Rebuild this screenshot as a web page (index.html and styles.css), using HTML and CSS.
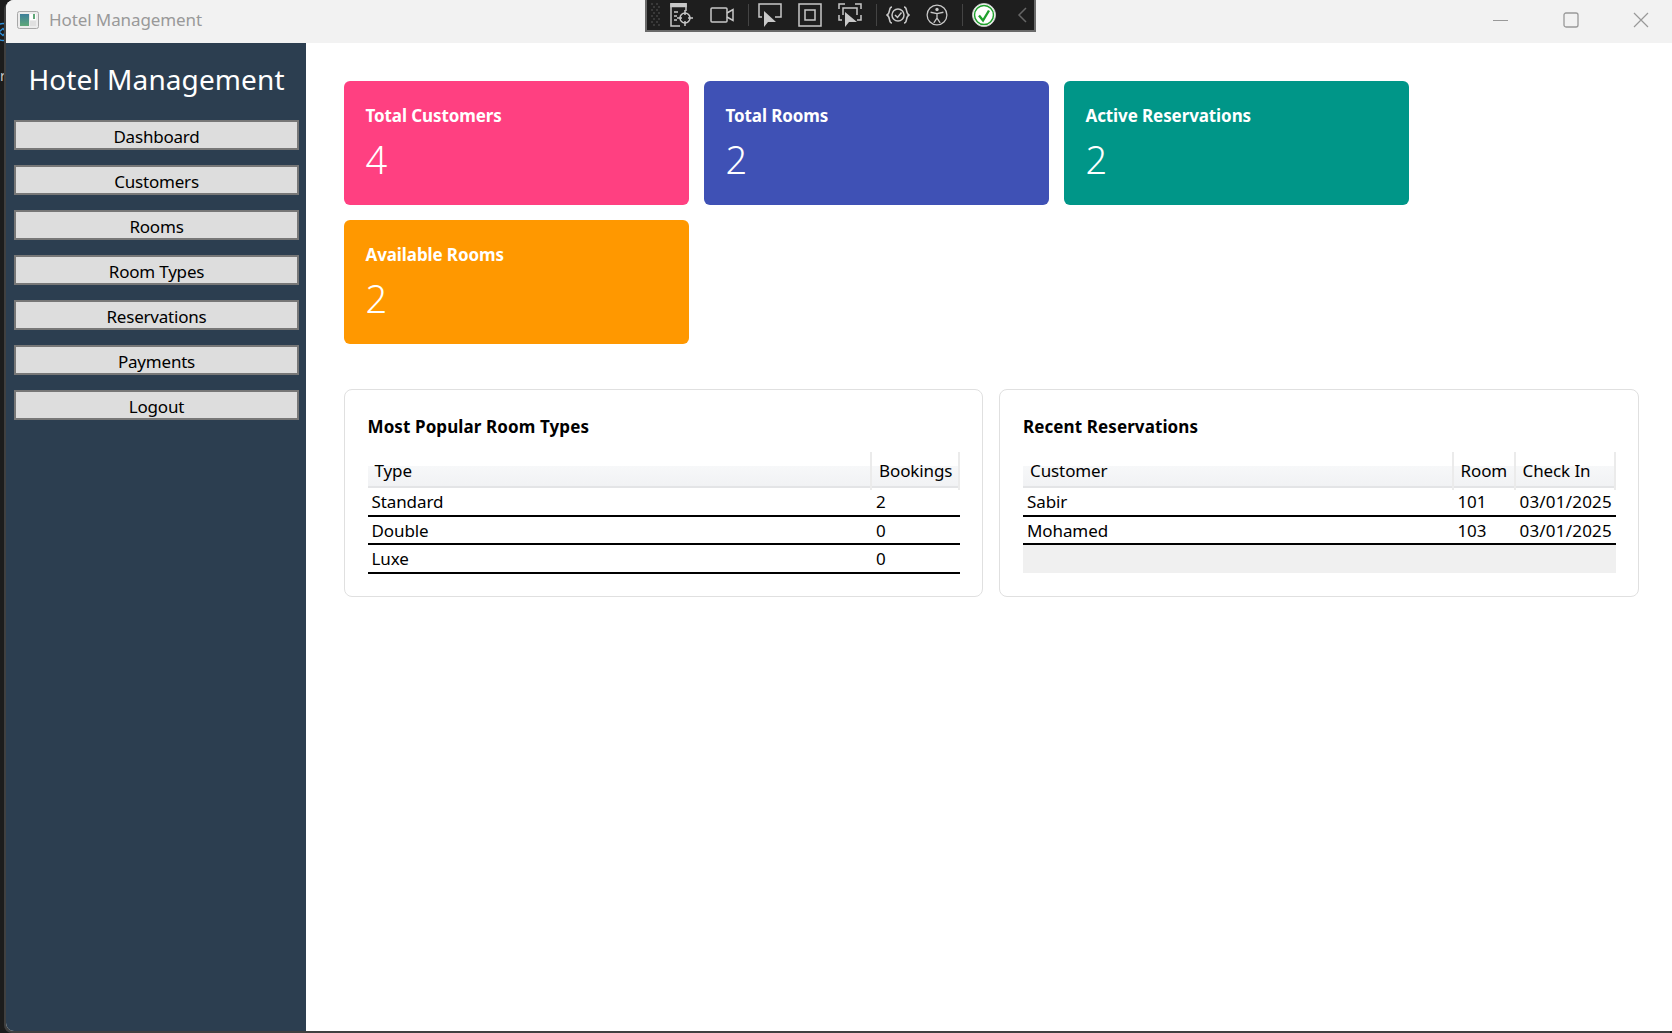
FILE: index.html
```html
<!DOCTYPE html>
<html>
<head>
  <title>Hotel Management</title>
  <meta charset="utf-8" />
  <link rel="stylesheet" href="styles.css">
</head>
<body>

<!--Bits of the desktop behind the window-->
<svg class="peek-icon" width="6" height="20" viewBox="0 0 6 20" fill="none" stroke="#2f8fd8" stroke-width="1.4">
  <circle cx="3" cy="10" r="8.500"/>
  <path d="M-1 10l4-3.500 3 3.500-3 3.500z"/>
</svg>
<span class="peek-text">r</span>

<div class="window">

  <!--Title bar-->
  <header class="titlebar">
    <svg class="app-icon" width="22" height="18" viewBox="0 0 22 18">
      <defs>
        <linearGradient id="pane" x1="0" y1="0" x2="0" y2="1">
          <stop offset="0" stop-color="#3d7f9a"/>
          <stop offset="1" stop-color="#5fa878"/>
        </linearGradient>
      </defs>
      <rect x="0.500" y="0.500" width="21" height="17" rx="2" fill="#ececec" stroke="#a8a8a8"/>
      <rect x="3" y="3" width="9" height="12" fill="url(#pane)"/>
      <rect x="13" y="3" width="6" height="6" fill="#fff"/>
      <rect x="16" y="3" width="2" height="5" fill="#5fa878"/>
      <rect x="13" y="10" width="6" height="5" fill="#e0e0e0"/>
    </svg>
    <span class="window-title">Hotel Management</span>
    <div class="window-controls">
      <svg width="16" height="16" viewBox="0 0 16 16"><path d="M0 8.500h15" stroke="#999" fill="none"/></svg>
      <svg width="16" height="16" viewBox="0 0 16 16"><rect x="1" y="1" width="14" height="14" rx="2" stroke="#999" stroke-width="1.300" fill="none"/></svg>
      <svg width="16" height="16" viewBox="0 0 16 16"><path d="M1 1l14 14M15 1L1 15" stroke="#999" stroke-width="1.200" fill="none"/></svg>
    </div>
  </header>

  <!--Debug toolbar over the title bar-->
  <div class="debug-toolbar">
    <svg class="grip" width="10" height="26" viewBox="0 0 10 26">
      <path d="M1 2h2M6 2h2M3 5h2M8 5h2M1 8h2M6 8h2M3 11h2M8 11h2M1 14h2M6 14h2M3 17h2M8 17h2M1 20h2M6 20h2M3 23h2M8 23h2" stroke="#555" fill="none"/>
    </svg>
    <svg width="24" height="24" viewBox="0 0 24 24" fill="none" stroke="#c8c8c8" stroke-width="1.500">
      <path d="M10 23H1V1h15v7"/>
      <path d="M1 0.500h15v3H1z" fill="#c8c8c8"/>
      <path d="M4 9h4M4 13h3M4 17h3"/>
      <circle cx="15" cy="15" r="5"/>
      <path d="M15 7v5M15 18v5M7 15h5M18 15h5"/>
    </svg>
    <svg width="24" height="24" viewBox="0 0 24 24" fill="none" stroke="#c8c8c8" stroke-width="1.500">
      <rect x="1" y="5" width="16" height="14" rx="1"/>
      <path d="M17 10l6-3.500v11l-6-3.500"/>
    </svg>
    <i class="sep"></i>
    <svg width="24" height="24" viewBox="0 0 24 24" fill="none" stroke="#c8c8c8" stroke-width="1.500">
      <path d="M4 14H1V1h22v13h-6"/>
      <path d="M6 8v16l4-5 8 0z" fill="#c8c8c8" stroke="none"/>
    </svg>
    <svg width="24" height="24" viewBox="0 0 24 24" fill="none" stroke="#c8c8c8" stroke-width="1.500">
      <rect x="1" y="1" width="22" height="22"/>
      <rect x="7" y="7" width="10" height="10"/>
    </svg>
    <svg width="24" height="24" viewBox="0 0 24 24" fill="none" stroke="#c8c8c8" stroke-width="1.500">
      <path d="M1 6V1h6M17 1h6v5M1 12v5h3M23 12v5h-4M5 12V5h14v7"/>
      <path d="M7 9v15l4-5 8 0z" fill="#c8c8c8" stroke="none"/>
    </svg>
    <i class="sep"></i>
    <svg width="24" height="24" viewBox="0 0 24 24" fill="none" stroke="#c8c8c8" stroke-width="1.500">
      <path d="M6 4C2 4 5 10 1 12c4 2 1 8 5 8M18 4c4 0 1 6 5 8-4 2-1 8-5 8"/>
      <circle cx="12" cy="12" r="6"/>
      <path d="M9 12l2.500 2.500 4-5"/>
    </svg>
    <svg width="22" height="22" viewBox="0 0 24 24" fill="none" stroke="#c8c8c8" stroke-width="1.400">
      <circle cx="12" cy="12" r="10.800"/>
      <circle cx="12" cy="6" r="1.800" fill="#c8c8c8" stroke="none"/>
      <path d="M5 9l7 1.500 7-1.500M12 10.500v5M12 15.500l-3.500 5M12 15.500l3.500 5"/>
    </svg>
    <i class="sep"></i>
    <svg width="24" height="24" viewBox="0 0 24 24">
      <circle cx="12" cy="12" r="11.500" fill="#fff" stroke="#c4c4c4"/>
      <circle cx="12" cy="12" r="9.500" fill="#fff" stroke="#1fa02c" stroke-width="1.500"/>
      <path d="M7 12.500l4 5 6-10" fill="none" stroke="#1fa02c" stroke-width="2.400"/>
    </svg>
    <svg class="collapse" width="10" height="24" viewBox="0 0 10 24"><path d="M9 5l-7 7 7 7" fill="none" stroke="#666" stroke-width="1.500"/></svg>
  </div>

  <div class="app">

    <!--Sidebar-->
    <nav class="sidebar">
      <h1>Hotel Management</h1>
      <a class="nav-btn">Dashboard</a>
      <a class="nav-btn">Customers</a>
      <a class="nav-btn">Rooms</a>
      <a class="nav-btn">Room Types</a>
      <a class="nav-btn">Reservations</a>
      <a class="nav-btn">Payments</a>
      <a class="nav-btn">Logout</a>
    </nav>

    <main class="content">

      <!--Stat cards-->
      <section class="cards">
        <div class="card pink"><h3>Total Customers</h3><p>4</p></div>
        <div class="card indigo"><h3>Total Rooms</h3><p>2</p></div>
        <div class="card teal"><h3>Active Reservations</h3><p>2</p></div>
        <div class="card orange"><h3>Available Rooms</h3><p>2</p></div>
      </section>

      <!--Tables-->
      <section class="panels">
        <div class="panel">
          <h2>Most Popular Room Types</h2>
          <div class="grid">
            <div class="grid-row grid-head types">
              <span>Type</span><span>Bookings</span>
            </div>
            <div class="grid-row types"><span>Standard</span><span>2</span></div>
            <div class="grid-row types"><span>Double</span><span>0</span></div>
            <div class="grid-row types"><span>Luxe</span><span>0</span></div>
          </div>
        </div>
        <div class="panel">
          <h2>Recent Reservations</h2>
          <div class="grid">
            <div class="grid-row grid-head recent">
              <span>Customer</span><span>Room</span><span>Check In</span>
            </div>
            <div class="grid-row recent"><span>Sabir</span><span>101</span><span class="date">03/01/2025</span></div>
            <div class="grid-row recent"><span>Mohamed</span><span>103</span><span class="date">03/01/2025</span></div>
            <div class="grid-empty"></div>
          </div>
        </div>
      </section>

    </main>
  </div>
</div>

</body>
</html>
```

FILE: styles.css
```css
html, body {
  margin: 0;
  padding: 0;
  height: 100%;
}

body {
  background: #1c1c1c;
  font-family: "Noto Sans", "Open Sans", sans-serif;
  overflow: hidden;
}

h1, h2, h3, p {
  margin: 0;
}

.peek-icon {
  position: absolute;
  top: 22px;
  left: 0;
}

.peek-text {
  position: absolute;
  top: 66px;
  left: 0;
  font-size: 14px;
  color: #c9c9c9;
}

.window {
  position: relative;
  margin-left: 6px;
  height: 1031px;
  display: flex;
  flex-direction: column;
  background: #fff;
  border-radius: 8px 0 0 8px;
  box-shadow: -2px 2px 0 #404040;
}

.titlebar {
  height: 43px;
  flex: none;
  box-sizing: border-box;
  display: flex;
  align-items: center;
  background: #f2f2f2;
  border-top-left-radius: 8px;
  padding: 0 0 4px 11px;
}

.app-icon {
  margin-right: 10px;
}

.window-title {
  font-size: 17px;
  letter-spacing: -0.1px;
  color: #999;
}

.window-controls {
  margin-left: auto;
  display: flex;
  gap: 54px;
  padding-right: 23px;
}

.debug-toolbar {
  position: absolute;
  top: 0;
  left: 639px;
  width: 391px;
  height: 32px;
  box-sizing: border-box;
  display: flex;
  align-items: center;
  gap: 16px;
  padding-left: 3px;
  background: #1e1e1e;
  border: 2px solid #6a6a6a;
  border-top: 0;
}

.debug-toolbar .sep {
  width: 1px;
  height: 22px;
  margin: 0 -7px 0 -2px;
  background: #444;
}

.debug-toolbar .grip {
  margin-right: -6px;
}

.debug-toolbar .collapse {
  margin-left: 5px;
}

.app {
  flex: 1;
  display: flex;
  min-height: 0;
}

.sidebar {
  width: 300px;
  flex: none;
  box-sizing: border-box;
  padding: 0 7px 0 8px;
  background: #2c3e50;
  border-bottom-left-radius: 8px;
  display: flex;
  flex-direction: column;
  gap: 15px;
}

.sidebar h1 {
  font-size: 28px;
  font-weight: 400;
  letter-spacing: 0.1px;
  line-height: 38px;
  color: #fff;
  text-align: center;
  margin: 17px 0 7px;
}

.nav-btn {
  height: 30px;
  box-sizing: border-box;
  border: 2px solid #777;
  background: #dddddd;
  color: #000;
  font-size: 17px;
  letter-spacing: -0.2px;
  line-height: 29px;
  text-align: center;
}

.content {
  flex: 1;
  padding: 38px 34px 0 37.500px;
}

.cards {
  display: grid;
  grid-template-columns: repeat(3, 345px);
  gap: 15px;
}

.card {
  height: 124px;
  box-sizing: border-box;
  padding: 24px 22px;
  border-radius: 6px;
  color: #fff;
}

.card h3 {
  font-size: 17px;
  font-weight: 700;
  letter-spacing: -0.1px;
  line-height: 22px;
}

.card p {
  font-size: 38px;
  font-weight: 300;
  line-height: 48px;
  margin-top: 8px;
}

.pink { background: #ff4081; }
.indigo { background: #3f51b5; }
.teal { background: #009688; }
.orange { background: #ff9800; }

.panels {
  display: grid;
  grid-template-columns: 639.500px 639.500px;
  gap: 16px;
  margin-top: 45px;
}

.panel {
  box-sizing: border-box;
  height: 208px;
  padding: 25px 22px 0 23px;
  border: 1px solid #e0e0e0;
  border-radius: 8px;
}

.panel h2 {
  font-size: 17px;
  font-weight: 700;
  letter-spacing: 0.1px;
  line-height: 24px;
  color: #000;
  margin-bottom: 13px;
}

.grid {
  font-size: 17px;
  letter-spacing: -0.1px;
  color: #000;
}

.grid-row {
  display: grid;
  height: 28.670px;
  box-sizing: border-box;
  border-bottom: 2px solid #000;
  line-height: 27px;
}

.grid-row span {
  padding: 0 4px;
  white-space: nowrap;
}

.grid-row .date {
  letter-spacing: 0.2px;
}

.grid-head {
  height: 36px;
  border-bottom: 2px solid #e3e4e6;
  background: linear-gradient(#fff 40%, #f7f8f9 40%, #f1f2f4);
  line-height: 38px;
}

.grid-head span {
  padding: 0 7px;
  border-right: 2px solid #ebebeb;
}

.types {
  grid-template-columns: 1fr 88px;
}

.recent {
  grid-template-columns: 1fr 62px 100px;
}

.grid-empty {
  height: 28px;
  background: #f0f0f0;
}
```
